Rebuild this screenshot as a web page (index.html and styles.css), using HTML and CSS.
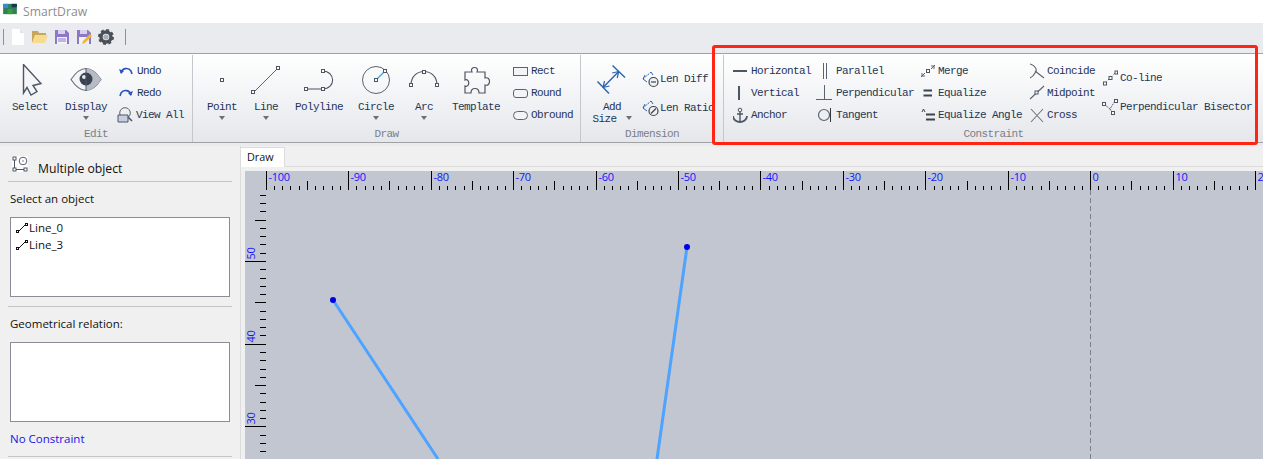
FILE: index.html
```html
<!DOCTYPE html>
<html lang="en">
<head>
<meta charset="utf-8">
<title>SmartDraw</title>
<link rel="stylesheet" href="styles.css">
</head>
<body>
<header class="titlebar">
  <svg class="applogo" viewBox="0 0 16 14" width="14" height="12"><rect x="0" y="1" width="16" height="12" fill="#2f7f57"/><rect x="0" y="1" width="6" height="5" fill="#3a8bc8"/><rect x="10" y="1" width="6" height="4" fill="#16384f"/><rect x="5" y="7" width="6" height="6" fill="#3f9a3c"/></svg>
  <span class="apptitle">SmartDraw</span>
</header>
<div class="quickbar">
  <i class="qsep"></i>
  <svg class="qicon" viewBox="0 0 16 16"><path d="M2 0h8l4 4v12H2z" fill="#fff"/><path d="M10 0l4 4h-4z" fill="#e2e2e2"/></svg>
  <svg class="qicon" viewBox="0 0 16 16"><path d="M0 2h6l1 2h7v3H3L0 14z" fill="#c9a65c"/><path d="M3 6h13l-3 8H0z" fill="#f6dc90"/></svg>
  <svg class="qicon" viewBox="0 0 16 16"><path d="M1 1h11l3 3v11H1z" fill="#8d78c8"/><rect x="4" y="1" width="7" height="4" fill="#d9d2ee"/><rect x="3" y="8" width="10" height="7" fill="#f2f0fa"/><path d="M4 10h8M4 12h8" stroke="#8d78c8"/></svg>
  <svg class="qicon" viewBox="0 0 16 16"><path d="M1 1h11l3 3v11H1z" fill="#8d78c8"/><rect x="4" y="1" width="7" height="4" fill="#d9d2ee"/><rect x="3" y="8" width="10" height="7" fill="#f2f0fa"/><path d="M6 15l1-3 7-7 2 2-7 7z" fill="#f2b632"/></svg>
  <svg class="qicon" viewBox="0 0 16 16"><circle cx="8" cy="8" r="5" fill="none" stroke="#4a5058" stroke-width="3.4"/><circle cx="8" cy="8" r="7" fill="none" stroke="#4a5058" stroke-width="2" stroke-dasharray="3 2.5"/><circle cx="8" cy="8" r="2.6" fill="#a8aeb6"/></svg>
  <i class="qsep qsep-end"></i>
</div>
<nav class="ribbon">
  <section class="group group-edit">
    <div class="group-body">
      <div class="bigbtn btn-select">
        <svg class="bigicon" viewBox="0 0 32 32"><path d="M9.500 .5V29L13 23.500 17 31 23 27.500 19 21.500 27 19.500Z" fill="#f5f6f8" stroke="#4c5664" stroke-width="1.400"/></svg>
        <span>Select</span>
      </div>
      <div class="bigbtn btn-display">
        <svg class="bigicon" viewBox="0 0 32 32"><path d="M1 15.500C6 8 11 4.500 16 4.500s10 3.500 15 11c-5 7.500-10 11-15 11S6 23 1 15.500z" fill="#f3f4f6" stroke="#6a7480" stroke-width="1.200"/><path d="M16 4.500c5 0 10 3.500 15 11-5 7.500-10 11-15 11z" fill="#b6bcc6"/><circle cx="16" cy="15" r="6.500" fill="#3c4350"/><circle cx="14" cy="13" r="2" fill="#e6e8ec"/><path d="M16 4v23" stroke="#4c5664"/></svg>
        <span>Display</span>
        <b class="caret"></b>
      </div>
      <ul class="smalls">
        <li><svg class="sicon" viewBox="0 0 14 14"><path d="M2 9a5.500 5.500 0 0 1 10 -2 l1 3" fill="none" stroke="#2a52be" stroke-width="1.600"/><path d="M0 5l2 5 3-3z" fill="#2a52be"/></svg>Undo</li>
        <li><svg class="sicon" viewBox="0 0 14 14"><path d="M12 9a5.500 5.500 0 0 0 -10 -2 l-1 3" fill="none" stroke="#2a52be" stroke-width="1.600"/><path d="M14 5l-2 5-3-3z" fill="#2a52be"/></svg>Redo</li>
        <li class="viewall"><svg class="sicon-l" viewBox="0 0 16 16"><circle cx="8" cy="6" r="5.300" fill="none" stroke="#5a6470"/><path d="M1 8h10v7H1z" fill="#c9cde0" stroke="#4c5664"/><path d="M11 10l4 4" stroke="#4c5664" stroke-width="1.600"/></svg>View All</li>
      </ul>
    </div>
    <div class="group-label">Edit</div>
  </section>
  <section class="group group-draw">
    <div class="group-body">
      <div class="bigbtn btn-point">
        <svg class="bigicon" viewBox="0 0 32 32"><rect x="14.500" y="14.500" width="3" height="3" fill="none" stroke="#4c5664"/></svg>
        <span>Point</span><b class="caret"></b>
      </div>
      <div class="bigbtn btn-line">
        <svg class="bigicon" viewBox="0 0 32 32"><path d="M3.500 28.500L28.500 3.500" stroke="#5a6470"/><rect x="1.500" y="26.500" width="3" height="3" fill="#fff" stroke="#4c5664"/><rect x="26.500" y="2.500" width="3" height="3" fill="#fff" stroke="#4c5664"/></svg>
        <span>Line</span><b class="caret"></b>
      </div>
      <div class="bigbtn btn-poly">
        <svg class="bigicon" viewBox="0 0 32 32"><path d="M3 25H19.500C33 25 33 7 19.500 7" fill="none" stroke="#4c5664" stroke-width="1.100"/><rect x="1.500" y="23.500" width="3" height="3" fill="#fff" stroke="#4c5664"/><rect x="18.500" y="23.500" width="3" height="3" fill="#fff" stroke="#4c5664"/><rect x="18.500" y="5.500" width="3" height="3" fill="#fff" stroke="#4c5664"/></svg>
        <span>Polyline</span>
      </div>
      <div class="bigbtn btn-circle">
        <svg class="bigicon" viewBox="0 0 32 32"><circle cx="16" cy="16" r="13.500" fill="none" stroke="#5a6470"/><path d="M16 16L25 7" stroke="#35a7ef" stroke-width="1.200"/><rect x="14.500" y="14.500" width="3" height="3" fill="#fff" stroke="#4c5664"/><rect x="23.500" y="5.500" width="3" height="3" fill="#fff" stroke="#4c5664"/></svg>
        <span>Circle</span><b class="caret"></b>
      </div>
      <div class="bigbtn btn-arc">
        <svg class="bigicon" viewBox="0 0 32 32"><path d="M3 21C3 3 29 3 29 21" fill="none" stroke="#4c5664" stroke-width="1.100"/><rect x="1.500" y="19.500" width="3" height="3" fill="#fff" stroke="#4c5664"/><rect x="14.500" y="6.500" width="3" height="3" fill="#fff" stroke="#4c5664"/><rect x="27.500" y="19.500" width="3" height="3" fill="#fff" stroke="#4c5664"/></svg>
        <span>Arc</span><b class="caret"></b>
      </div>
      <div class="bigbtn btn-template">
        <svg class="bigicon" viewBox="0 0 32 32"><path d="M5 8H12C9 2 20 2 17 8H25V14C31 12 31 23 25 21V29H19C19 23 11 23 11 29H5V22C10 24 10 14 5 16Z" fill="none" stroke="#4c5664" stroke-width="1.200"/></svg>
        <span>Template</span>
      </div>
      <ul class="smalls shapes">
        <li><i class="shape shape-rect"></i>Rect</li>
        <li><i class="shape shape-round"></i>Round</li>
        <li><i class="shape shape-ob"></i>Obround</li>
      </ul>
    </div>
    <div class="group-label">Draw</div>
  </section>
  <section class="group group-dim">
    <div class="group-body">
      <div class="bigbtn btn-size">
        <svg class="bigicon" viewBox="0 0 32 32"><path d="M1.500 17.500L13 29.500M16.500 1.500L29 13.500M7 23.500L22.700 7.500" fill="none" stroke="#2a62b0" stroke-width="1.400"/><path d="M7 23.500l1.500-6.500M7 23.500l6.500-1.500M22.700 7.500l-1.500 6.500M22.700 7.500l-6.500 1.500" fill="none" stroke="#2a62b0" stroke-width="1.200"/></svg>
        <span class="twoline">Add<br>Size <b class="caret inline"></b></span>
      </div>
      <ul class="smalls dims">
        <li><svg class="sicon-d" viewBox="0 0 18 18"><path d="M1 9l8-7" stroke="#2a62b0" stroke-dasharray="2 1"/><path d="M1 9l2-4M1 9l4 3M9 2l2 3" fill="none" stroke="#2a62b0"/><circle cx="11.500" cy="12" r="4.500" fill="#f0f1f4" stroke="#3c4350" stroke-width="1.200"/><path d="M9 12h5" stroke="#3c4350" stroke-width="1.200"/></svg>Len Diff</li>
        <li><svg class="sicon-d" viewBox="0 0 18 18"><path d="M1 9l8-7" stroke="#2a62b0" stroke-dasharray="2 1"/><path d="M1 9l2-4M1 9l4 3M9 2l2 3" fill="none" stroke="#2a62b0"/><circle cx="11.500" cy="12" r="4.500" fill="#f0f1f4" stroke="#3c4350" stroke-width="1.200"/><path d="M9 14.500l5-5" stroke="#3c4350" stroke-width="1.200"/></svg>Len Ratio</li>
      </ul>
    </div>
    <div class="group-label">Dimension</div>
  </section>
  <section class="group group-con">
    <div class="group-body con-body">
      <ul class="smalls col col-a">
        <li><svg class="cicon" viewBox="0 0 16 16"><path d="M0 8h14" stroke="#4c5664" stroke-width="2"/></svg>Horizontal</li>
        <li><svg class="cicon" viewBox="0 0 16 16"><path d="M6 1v14" stroke="#4c5664" stroke-width="2"/></svg>Vertical</li>
        <li><svg class="cicon" viewBox="0 0 16 16"><circle cx="7" cy="3" r="1.800" fill="none" stroke="#4c5664"/><path d="M7 5v10M4 7h6" stroke="#4c5664" stroke-width="1.400"/><path d="M0 9c0 4 4 6 7 6s7-2 7-6" fill="none" stroke="#4c5664" stroke-width="1.800"/></svg>Anchor</li>
      </ul>
      <ul class="smalls col col-b">
        <li><svg class="cicon" viewBox="0 0 16 16"><path d="M7.500 0v16M10.500 0v16" stroke="#5a6470"/></svg>Parallel</li>
        <li><svg class="cicon" viewBox="0 0 16 16"><path d="M8.500 0v14M0 14.500h16" stroke="#5a6470"/></svg>Perpendicular</li>
        <li><svg class="cicon" viewBox="0 0 16 16"><circle cx="8" cy="8" r="5.500" fill="#eceef1" stroke="#5a6470" stroke-width="1.200"/><path d="M14.500 1v14" stroke="#2f3640"/></svg>Tangent</li>
      </ul>
      <ul class="smalls col col-c">
        <li><svg class="cicon" viewBox="0 0 16 16"><path d="M1 14l4-4M2 10v3h3M15 2l-4 4M14 6V3h-3" fill="none" stroke="#5a6470"/><rect x="6.500" y="6.500" width="3" height="3" fill="#fff" stroke="#4c5664"/></svg>Merge</li>
        <li><svg class="cicon" viewBox="0 0 16 16"><path d="M3.500 5.500h8.500M3.500 10.500h8.500" stroke="#3c4350" stroke-width="2"/></svg>Equalize</li>
        <li><svg class="cicon" viewBox="0 0 16 16"><path d="M6 7.500h9M6 12.500h9" stroke="#3c4350" stroke-width="2"/><path d="M2 5l1.500-3L5 5" fill="none" stroke="#3c4350"/></svg>Equalize Angle</li>
      </ul>
      <ul class="smalls col col-d">
        <li><svg class="cicon" viewBox="0 0 16 16"><path d="M1 1C6 2 9 7 6 10 5 12 3 14 1 15M6 8L15 15" fill="none" stroke="#5a6470" stroke-width="1.100"/></svg>Coincide</li>
        <li><svg class="cicon" viewBox="0 0 16 16"><path d="M1 14L15 1" stroke="#5a6470" stroke-width="1.100"/><rect x="6" y="6" width="3" height="3" fill="#fff" stroke="#4c5664"/></svg>Midpoint</li>
        <li><svg class="cicon" viewBox="0 0 16 16"><path d="M2 2l12 13M2 15L14 2" stroke="#6a7480" stroke-width="1.100"/></svg>Cross</li>
      </ul>
      <ul class="smalls col col-e">
        <li><svg class="cicon" viewBox="0 0 16 16"><path d="M3 13L14 2" stroke="#5a6470" stroke-dasharray="2 2"/><rect x="1.500" y="12" width="3" height="3" fill="#fff" stroke="#4c5664"/><rect x="7" y="6.500" width="3" height="3" fill="#fff" stroke="#4c5664"/><rect x="13" y="1" width="2.500" height="3" fill="#fff" stroke="#4c5664"/></svg>Co-line</li>
        <li><svg class="cicon" viewBox="0 0 16 16"><path d="M2 5l6 5 5-8M8 10l2 3" fill="none" stroke="#5a6470" stroke-dasharray="2 1"/><rect x="0.500" y="3.500" width="3" height="3" fill="#fff" stroke="#4c5664"/><rect x="12.500" y="0.500" width="3" height="3" fill="#fff" stroke="#4c5664"/><rect x="9.500" y="12.500" width="3" height="3" fill="#fff" stroke="#4c5664"/></svg>Perpendicular Bisector</li>
      </ul>
    </div>
    <div class="group-label">Constraint</div>
  </section>
</nav>
<i class="annotation"></i>
<main class="workspace">
  <aside class="panel">
    <div class="panel-head">
      <svg class="panel-icon" viewBox="0 0 16 16"><rect width="16" height="16" fill="#fff"/><path d="M2.500 3v10.500H12" fill="none" stroke="#4c5664"/><rect x="1" y="1" width="3" height="3" fill="#fff" stroke="#4c5664"/><rect x="1" y="12" width="3" height="3" fill="#fff" stroke="#4c5664"/><rect x="12" y="12" width="3" height="3" fill="#fff" stroke="#4c5664"/><circle cx="11" cy="5" r="3.800" fill="none" stroke="#5a6470"/><circle cx="11" cy="5" r=".7" fill="#4c5664"/></svg>
      <span>Multiple object</span>
    </div>
    <div class="panel-sec sec-select">
      <p class="panel-label">Select an object</p>
      <div class="listbox">
        <div class="listitem"><svg class="line-ico" viewBox="0 0 12 12"><path d="M2 10L10 2" stroke="#111"/><rect x="0.500" y="8.500" width="2" height="2" fill="#fff" stroke="#111"/><rect x="9.500" y="1.500" width="2" height="2" fill="#fff" stroke="#111"/></svg>Line_0</div>
        <div class="listitem"><svg class="line-ico" viewBox="0 0 12 12"><path d="M2 10L10 2" stroke="#111"/><rect x="0.500" y="8.500" width="2" height="2" fill="#fff" stroke="#111"/><rect x="9.500" y="1.500" width="2" height="2" fill="#fff" stroke="#111"/></svg>Line_3</div>
      </div>
    </div>
    <div class="panel-sec">
      <p class="panel-label">Geometrical relation:</p>
      <div class="listbox"></div>
      <p class="panel-note">No Constraint</p>
    </div>
  </aside>
  <section class="canvas-area">
    <div class="tabs"><span class="tab">Draw</span></div>
    <div class="canvas" id="canvas">
      <svg class="drawing" width="1018" height="288" viewBox="245 171 1018 288" id="drawing">
        <path d="M1090.500 190V459" stroke="#7d8088" stroke-dasharray="5 3" fill="none"/>
        <path d="M333 300L438 459M687 247L657 459" stroke="#4da3ff" stroke-width="3" fill="none"/>
        <circle cx="333" cy="300" r="3" fill="#0000e8"/>
        <circle cx="687" cy="247" r="3" fill="#0000e8"/>
      </svg>
    </div>
  </section>
</main>
<script src="ruler.js"></script>
</body>
</html>
```
FILE: styles.css
```css
* { box-sizing: border-box; }
html, body { margin: 0; padding: 0; }
body {
  width: 1263px;
  height: 459px;
  overflow: hidden;
  position: relative;
  background: #e9ebee;
  font-family: "Liberation Sans", Arial, sans-serif;
}
ul { list-style: none; margin: 0; padding: 0; }
p { margin: 0; }

.titlebar { height: 23px; background: #fff; display: flex; align-items: center; padding-left: 3px; }
.applogo { margin-top: -6px; }
.apptitle { margin-left: 6px; font-size: 12.200px; color: #8e8e8e; font-family: "Open Sans", sans-serif; }

.quickbar { height: 30px; background: #e9ebee; display: flex; align-items: center; padding: 0 0 2px 3px; }
.qsep { width: 1px; height: 16px; background: #8c9198; margin-right: 6px; }
.qsep-end { margin: 0 0 0 5px; }
.qicon { width: 16px; height: 16px; margin-right: 6px; }

.ribbon {
  height: 90px;
  display: flex;
  border-top: 1px solid #a0a2a6;
  border-bottom: 1px solid #a0a2a6;
  background: linear-gradient(#fff, #e5e7eb);
  font-family: "Liberation Mono", monospace;
  font-size: 11px;
  letter-spacing: -.6px;
  color: #1f3556;
}
.group { display: flex; flex-direction: column; border-right: 1px solid #c4c7cc; padding-top: 1px; margin-top: 1px; }
.group-edit { width: 193px; }
.group-draw { width: 388px; }
.group-dim { width: 143px; }
.group-con { flex: 1; border-right: 0; }
.group-body { flex: none; height: 69px; display: flex; position: relative; }
.group-label { height: 17px; padding-top: 2px; text-align: center; color: #7b7f87; line-height: 15px; }

.bigbtn { display: flex; flex-direction: column; align-items: center; white-space: nowrap; }
.bigicon { width: 32px; height: 32px; margin: 8px 0 4px; flex: none; }
.bigbtn span { line-height: 14px; }
.bigbtn .twoline { line-height: 12px; text-align: center; margin-top: 1px; }
.caret { width: 0; height: 0; border: 3px solid transparent; border-top: 4px solid #6a7078; border-bottom: 0; margin-top: 2px; flex: none; }
.caret.inline { display: inline-block; margin: 0 0 2px 3px; }

.btn-select { width: 44px; margin-left: 8px; }
.btn-display { width: 44px; margin-left: 12px; }
.smalls { display: flex; flex-direction: column; padding-top: 4px; }
.smalls li { height: 22px; flex: none; display: flex; align-items: center; white-space: nowrap; }
.sicon { width: 14px; height: 14px; margin-right: 4px; }
.sicon-l { width: 16px; height: 16px; margin: 0 3px 0 -2px; }
.group-edit .smalls { margin-left: 11px; }

.btn-point { width: 36px; margin-left: 11px; }
.btn-line { width: 32px; margin-left: 10px; }
.btn-poly { width: 50px; margin-left: 12px; }
.btn-circle { width: 40px; margin-left: 12px; }
.btn-arc { width: 32px; margin-left: 12px; }
.btn-template { width: 50px; margin-left: 11px; }
.shapes { margin-left: 12px; }
.shape { display: block; width: 15px; height: 9px; margin-right: 3px; border: 1px solid #5a6470; background: #f3f4f6; }
.shape-round { border-radius: 3px; }
.shape-ob { border-radius: 5px; }

.btn-size { width: 42px; margin-left: 10px; }
.dims { margin-left: 9px; padding-top: 8px; }
.smalls.dims li { height: 29px; }
.sicon-d { width: 18px; height: 18px; flex: none; }

.con-body { padding-left: 7px; }
.cicon { width: 16px; height: 16px; margin: 0 2px; flex: none; }
.col-a { width: 85px; }
.col-b { width: 102px; }
.col-b .cicon { margin: 0 4px 0 0; }
.col-c { width: 109px; }
.col-d { width: 73px; }
.col-e { padding-top: 7px; }
.smalls.col-e li { height: 29px; }

.annotation {
  position: absolute;
  left: 712px;
  top: 45px;
  width: 546px;
  height: 100px;
  border: 3px solid #ff2414;
  border-radius: 3px;
}

.workspace { display: flex; height: 313px; margin-top: 3px; background: #f0f0f0; }
.panel { width: 241px; border-right: 1px solid #dcdcdc; padding: 0 8px; font-size: 12px; color: #111; background: #f0f0f0; flex: none; }
.panel-head { height: 36px; display: flex; align-items: center; padding: 10px 0 0 4px; font-size: 12.200px; font-family: "Open Sans", sans-serif; border-bottom: 1px solid #c4c4c4; }
.panel-icon { width: 16px; height: 16px; margin-right: 10px; margin-top: -10px; }
.panel-sec { border-bottom: 1px solid #c4c4c4; }
.panel-label { height: 35px; line-height: 34px; padding-left: 2px; font-family: "Open Sans", sans-serif; font-size: 11.500px; }
.listbox { width: 220px; height: 80px; margin-left: 2px; background: #fff; border: 1px solid #8b8b99; padding: 1px 5px; }
.sec-select { padding-bottom: 9px; }
.listitem { height: 17px; display: flex; align-items: center; font-family: "Open Sans", sans-serif; font-size: 11.500px; }
.line-ico { width: 12px; height: 12px; margin-right: 1px; }
.panel-note { height: 34px; line-height: 34px; padding-left: 2px; color: #1515e6; font-family: "Open Sans", sans-serif; font-size: 11.500px; }

.canvas-area { flex: 1; display: flex; flex-direction: column; min-width: 0; padding-top: 1px; background: #f0f0f0; }
.tabs { height: 20px; flex: none; border-bottom: 1px solid #dcdcdc; margin-bottom: 4px; }
.tab { display: block; height: 20px; width: 45px; margin-left: -1px; padding-left: 6px; background: #fff; border: 1px solid #dcdcdc; border-bottom: 0; font-size: 10.800px; line-height: 17px; font-family: "Open Sans", sans-serif; color: #111; }
.canvas { flex: 1; margin-left: 4px; background: #c2c6d1; position: relative; }
.drawing { display: block; overflow: visible; }
.rlabel { font-family: "Open Sans", sans-serif; font-size: 11px; letter-spacing: -.3px; fill: #1515ff; }
```
FILE: ruler.js
```js
// Builds the horizontal and vertical rulers of the drawing canvas.
(function () {
  var NS = "http://www.w3.org/2000/svg";
  var svg = document.getElementById("drawing");
  var STEP = 8.245;
  var X0 = 1090.7;
  var Y50 = 261;
  var d = "";
  for (var u = -103; u <= 22; u++) {
    var x = Math.floor(X0 + u * STEP) + 0.5;
    if (x < 266) continue;
    var top = u % 10 === 0 ? 171 : (u % 5 === 0 ? 181 : 186);
    d += "M" + x + " " + top + "V190";
    if (u % 10 === 0) addText(x + 2, 180.5, String(u));
  }
  for (var v = 58; v >= 25; v--) {
    var y = Math.round(Y50 + (50 - v) * 8.27) + 0.5;
    var left = v % 10 === 0 ? 245 : (v % 5 === 0 ? 255 : 260);
    d += "M" + left + " " + y + "H266";
    if (v % 10 === 0) {
      var t = addText(255, y - 2, String(v));
      t.setAttribute("transform", "rotate(-90 255 " + (y - 2) + ")");
    }
  }
  var p = document.createElementNS(NS, "path");
  p.setAttribute("d", d);
  p.setAttribute("stroke", "#000");
  p.setAttribute("fill", "none");
  svg.appendChild(p);

  function addText(tx, ty, s) {
    var el = document.createElementNS(NS, "text");
    el.setAttribute("x", tx);
    el.setAttribute("y", ty);
    el.setAttribute("class", "rlabel");
    el.textContent = s;
    svg.appendChild(el);
    return el;
  }
})();
```
